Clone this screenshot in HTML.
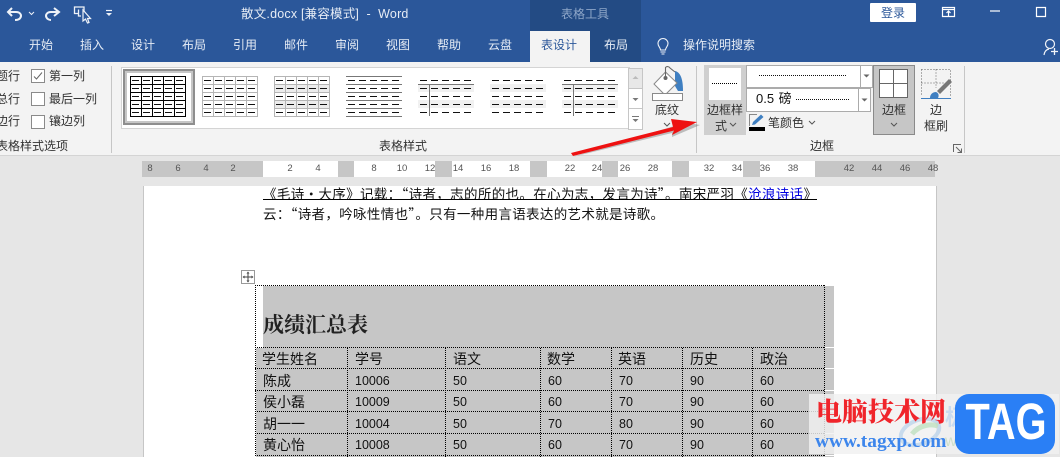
<!DOCTYPE html>
<html><head><meta charset="utf-8"><style>
html,body{margin:0;padding:0}
body{width:1060px;height:457px;overflow:hidden;position:relative;background:#e6e6e6;font-family:"Liberation Sans","Noto Sans CJK SC",sans-serif;font-size:12px;color:#333}
.a,.t,.c{position:absolute}
.t,.c{white-space:nowrap;line-height:16px}
.c{transform:translateX(-50%)}
.w{color:#e6ecf5}
.d{font-family:"Liberation Sans","WenQuanYi Zen Hei","Noto Sans CJK SC",sans-serif;font-size:14px;color:#111;line-height:18px}
.n{font-size:12.5px;color:#111;line-height:18px}
.r{font-size:9.5px;color:#555;transform:translateX(-50%);position:absolute;top:163px;line-height:12px}
.p{font-size:13.5px;line-height:16px;color:#111;font-family:"WenQuanYi Zen Hei","Noto Sans CJK SC",sans-serif}
svg{position:absolute;overflow:visible}
</style></head><body>

<div class="a" style="left:0;top:0;width:1060px;height:62px;background:#2b579a"></div>
<div class="a" style="left:530px;top:0;width:111px;height:31px;background:#234b84"></div>
<div class="a" style="left:590px;top:31px;width:51px;height:31px;background:#234b84"></div>
<div class="a" style="left:530px;top:31px;width:60px;height:31px;background:#f3f3f3"></div>
<div class="a" style="left:0;top:62px;width:1060px;height:93px;background:#f3f3f3;border-bottom:1px solid #d4d4d4"></div>

<svg style="left:0;top:0" width="130" height="30" fill="none" stroke="#eef2f8" stroke-width="2">
<path d="M12 8L8 12L12 16M8 12H16C20 12 22 15 20.500 17.500C19.500 19.500 17 20 15 20"/>
<path d="M29 12l2.500 2.500L34 12" stroke-width="1"/>
<path d="M54 8L59 12L54 16M59 12H51C47 12 45 15 46.500 17.500C47.500 19.500 50 20 51 20"/>
<path d="M78.500 13.500H74.500V7H84V12M78.500 9.500V16H81" stroke-width="1.300"/>
<path d="M83 10V21L85.500 19L87.500 23L89 22.500L87.500 18.500H90.500Z" fill="#2b579a" stroke-width="1.200"/>
<path d="M106 10.500h6" stroke-width="1.200"/><path d="M106 13h6l-3 3z" fill="#eef2f8" stroke="none"/>
</svg>

<div class="t w" style="left:241px;top:6px;font-size:12.500px;letter-spacing:.2px">散文.docx [兼容模式]&nbsp; -&nbsp; Word</div>
<div class="c" style="left:585px;top:6px;color:#8fa7c9">表格工具</div>
<div class="a" style="left:870px;top:3px;width:46px;height:19px;background:#fff;border-radius:1px"></div>
<div class="c" style="left:893px;top:5px;color:#2b579a">登录</div>
<svg style="left:940px;top:5px" width="110" height="20" fill="none" stroke="#fff" stroke-width="1.200">
<path d="M2.500 2.500H14.500V11.500H2.500ZM2.500 4.500H14.500"/><path d="M8.500 11V6.500M6.500 8L8.500 6L10.500 8"/>
<path d="M50 6H60"/><path d="M96.500 2.500H105.500V11.500H96.500Z"/></svg>

<div class="c w" style="left:41px;top:37px">开始</div>
<div class="c w" style="left:92px;top:37px">插入</div>
<div class="c w" style="left:143px;top:37px">设计</div>
<div class="c w" style="left:194px;top:37px">布局</div>
<div class="c w" style="left:245px;top:37px">引用</div>
<div class="c w" style="left:296px;top:37px">邮件</div>
<div class="c w" style="left:347px;top:37px">审阅</div>
<div class="c w" style="left:398px;top:37px">视图</div>
<div class="c w" style="left:449px;top:37px">帮助</div>
<div class="c w" style="left:500px;top:37px">云盘</div>
<div class="c" style="left:559px;top:37px;color:#2b579a">表设计</div>
<div class="c w" style="left:616px;top:37px">布局</div>
<svg style="left:655px;top:37px" width="16" height="20" fill="none" stroke="#eef2f8" stroke-width="1.100">
<path d="M5.500 13C5.500 10.500 3 9.500 3 6.500A5 5 0 0 1 13 6.500C13 9.500 10.500 10.500 10.500 13ZM5.500 15H10.500M6.500 17H9.500"/></svg>
<div class="t w" style="left:683px;top:37px">操作说明搜索</div>
<svg style="left:1040px;top:36px" width="20" height="22" fill="none" stroke="#f0f3f8" stroke-width="1.200">
<circle cx="10" cy="8" r="4.500"/><path d="M4 19C4.500 15.500 6.500 13.500 9 13"/><path d="M11 15.500H18M14.500 12V19" stroke-width="1.300"/></svg>

<!-- left options -->
<div class="t" style="left:-4px;top:68px">题行</div>
<div class="t" style="left:-4px;top:91px">总行</div>
<div class="t" style="left:-4px;top:113px">边行</div>
<div class="a" style="left:31px;top:69px;width:12px;height:12px;border:1px solid #8a8a8a;background:#fff"></div>
<div class="a" style="left:31px;top:92px;width:12px;height:12px;border:1px solid #8a8a8a;background:#fff"></div>
<div class="a" style="left:31px;top:115px;width:12px;height:12px;border:1px solid #8a8a8a;background:#fff"></div>
<svg style="left:31px;top:69px" width="14" height="14" fill="none" stroke="#666"><path d="M3 7.500L5.500 10L11 3.500"/></svg>
<div class="t" style="left:49px;top:68px">第一列</div>
<div class="t" style="left:49px;top:91px">最后一列</div>
<div class="t" style="left:49px;top:113px">镶边列</div>
<div class="t" style="left:-4px;top:138px">表格样式选项</div>
<div class="a" style="left:111px;top:66px;width:1px;height:87px;background:#c6c6c6"></div>
<div class="a" style="left:696px;top:66px;width:1px;height:87px;background:#c6c6c6"></div>
<div class="a" style="left:964px;top:66px;width:1px;height:87px;background:#c6c6c6"></div>

<!-- gallery -->
<div class="a" style="left:121px;top:67px;width:507px;height:60px;background:#fff;border:1px solid #d4d4d4"></div>
<div class="a" style="left:123px;top:69px;width:68px;height:52px;border:2px solid #8e8e8e;background:#c6c6c6"></div>
<div class="a" style="left:127px;top:73px;width:64px;height:48px;background:#fff"></div>
<svg width="0" height="0" style="left:0;top:0"><defs>
<symbol id="ds" width="56" height="42" overflow="visible"><path d="M2 4.500h7M13 4.500h7M24 4.500h7M35 4.500h7M46 4.500h7M2 12.500h7M13 12.500h7M24 12.500h7M35 12.500h7M46 12.500h7M2 20.500h7M13 20.500h7M24 20.500h7M35 20.500h7M46 20.500h7M2 28.500h7M13 28.500h7M24 28.500h7M35 28.500h7M46 28.500h7M2 36.500h7M13 36.500h7M24 36.500h7M35 36.500h7M46 36.500h7" stroke="#111" fill="none"/></symbol>
<symbol id="gr" width="56" height="42" overflow="visible"><path d="M.5 .5H55.500V40.500H.5ZM11.500 .5V40.500M22.500 .5V40.500M33.500 .5V40.500M44.500 .5V40.500M.5 8.500H55.500M.5 16.500H55.500M.5 24.500H55.500M.5 32.500H55.500" fill="none"/></symbol>
</defs></svg>
<svg style="left:130px;top:76px" width="56" height="42" stroke="#000"><use href="#gr" stroke-width="1"/><use href="#ds"/></svg>
<svg style="left:202px;top:76px" width="56" height="42" stroke="#b5b5b5"><use href="#gr"/><use href="#ds"/></svg>
<svg style="left:274px;top:76px" width="56" height="42"><rect x="0" y="8" width="56" height="8" fill="#ececec"/><rect x="0" y="24" width="56" height="8" fill="#ececec"/><use href="#gr" stroke="#b5b5b5"/><use href="#ds"/></svg>
<svg style="left:346px;top:76px" width="56" height="42" stroke="#777"><path d="M0 .5H56M0 8.500H56M0 16.500H56M0 24.500H56M0 32.500H56M0 40.500H56" fill="none"/><use href="#ds"/></svg>
<svg style="left:418px;top:76px" width="56" height="42"><rect y="8" width="56" height="8" fill="#f1f1f1"/><rect y="24" width="56" height="8" fill="#f1f1f1"/><path d="M0 8.500H56M11.500 8V40" stroke="#777" fill="none"/><use href="#ds"/></svg>
<svg style="left:490px;top:76px" width="56" height="42"><rect y="8" width="56" height="8" fill="#f1f1f1"/><rect y="24" width="56" height="8" fill="#f1f1f1"/><use href="#ds"/></svg>
<svg style="left:562px;top:76px" width="56" height="42"><rect y="8" width="56" height="8" fill="#f1f1f1"/><rect y="24" width="56" height="8" fill="#f1f1f1"/><path d="M0 8.500H56M11.500 8V40" stroke="#777" fill="none"/><use href="#ds"/></svg>
<div class="a" style="left:628px;top:68px;width:13px;height:60px;background:#fff;border:1px solid #c6c6c6"></div>
<div class="a" style="left:629px;top:69px;width:13px;height:20px;background:#e8e8e8"></div>
<svg style="left:628px;top:68px" width="15" height="62" fill="#777"><path d="M0 20.500H14M0 40.500H14" stroke="#c6c6c6"/><path d="M4.500 11l3-3l3 3z" fill="#bbb"/><path d="M4.500 30h6l-3 3z"/><path d="M4 48h7v1H4zM4.500 51h6l-3 3z"/></svg>
<div class="c" style="left:403px;top:138px">表格样式</div>

<!-- shading -->
<svg style="left:650px;top:64px" width="36" height="40">
<path d="M25 7C30 8 33 14 33 27H28L25 22Z" fill="#3f7fc1"/>
<path d="M15.500 8L4 20L15 31L27 19Z" fill="#fff" stroke="#8a8a8a"/>
<path d="M15.500 13V3.500C17 2 19 2.500 20 4L25 8" fill="none" stroke="#666" stroke-width="1.100"/>
<circle cx="15.500" cy="14" r="2" fill="#666"/>
<rect x="2.500" y="29.500" width="30" height="7" fill="#fff" stroke="#8a8a8a"/>
</svg>
<div class="c" style="left:667px;top:102px">底纹</div>
<svg style="left:663px;top:122px" width="10" height="6" fill="none" stroke="#555"><path d="M1 1l3 3l3-3"/></svg>

<!-- border styles -->
<div class="a" style="left:704px;top:65px;width:42px;height:70px;background:#cfcfcf"></div>
<div class="a" style="left:709px;top:68px;width:32px;height:32px;background:#fff"></div>
<svg style="left:704px;top:65px" width="42" height="70" fill="none" stroke="#000"><path d="M8 18.500H34" stroke-dasharray="1 1"/></svg>
<div class="c" style="left:725px;top:102px">边框样</div>
<div class="c" style="left:721px;top:118px">式</div>
<svg style="left:729px;top:122px" width="10" height="6" fill="none" stroke="#555"><path d="M1 1l3 3l3-3"/></svg>
<div class="a" style="left:746px;top:65px;width:125px;height:21px;background:#fff;border:1px solid #ababab"></div>
<div class="a" style="left:746px;top:88px;width:123px;height:22px;background:#fff;border:1px solid #ababab"></div>
<svg style="left:746px;top:65px" width="128" height="48" fill="none" stroke="#111">
<path d="M13 10.500H100M50 34.500H103" stroke-dasharray="1 1"/>
<path d="M114.500 0V22M112.500 23V46" stroke="#ababab"/>
<path d="M117.500 9.500h6l-3 3z" fill="#666" stroke="none"/><path d="M115.500 33.500h6l-3 3z" fill="#666" stroke="none"/></svg>
<div class="t" style="left:756px;top:91px;color:#111;font-size:13px;word-spacing:1px">0.5 磅</div>
<svg style="left:748px;top:113px" width="20" height="20" fill="none">
<path d="M1.500 13V1.500H9" stroke="#888"/><path d="M4 12L5 9L13 1.500L15.500 4L7 11.500Z" fill="#3f7fc1"/>
<rect x="1" y="14" width="16" height="4" fill="#000"/></svg>
<div class="t" style="left:768px;top:115px">笔颜色</div>
<svg style="left:808px;top:120px" width="10" height="6" fill="none" stroke="#555"><path d="M1 1l3 3l3-3"/></svg>
<div class="a" style="left:873px;top:65px;width:40px;height:68px;background:#c6c6c6;border:1px solid #8a8a8a"></div>
<svg style="left:879px;top:69px" width="30" height="30" fill="#fff" stroke="#666"><rect x=".5" y=".5" width="28" height="28"/><path d="M14.500 .5V28.500M.5 14.500H28.500"/></svg>
<div class="c" style="left:894px;top:102px">边框</div>
<svg style="left:890px;top:122px" width="10" height="6" fill="none" stroke="#555"><path d="M1 1l3 3l3-3"/></svg>
<svg style="left:921px;top:68px" width="32" height="34" fill="none">
<path d="M.5 1.500H29.500V28M.5 1.500V28M15 1.500V20M.5 15H26" stroke="#666" stroke-dasharray="1 2"/>
<path d="M0 30.500H30" stroke="#3f7fc1"/>
<path d="M9 30C9 26 12 24 15 24C18 25 18 28 17 30Z" fill="#3f7fc1"/>
<path d="M16 23L28 11L31 14L19 26Z" fill="#777"/></svg>
<div class="c" style="left:936px;top:102px">边</div>
<div class="c" style="left:936px;top:118px">框刷</div>
<div class="c" style="left:822px;top:138px">边框</div>
<svg style="left:953px;top:144px" width="10" height="10" fill="none" stroke="#666"><path d="M.5 8V.5H8"/><path d="M3 3L8 8M8.500 4.500V8.500H4.500"/></svg>

<!-- ruler -->
<div class="a" style="left:142px;top:161px;width:793px;height:16px;background:#c6c6c6"></div>
<div class="a" style="left:263px;top:161px;width:75px;height:16px;background:#fff"></div>
<div class="a" style="left:354px;top:161px;width:81px;height:16px;background:#fff"></div>
<div class="a" style="left:452px;top:161px;width:78px;height:16px;background:#fff"></div>
<div class="a" style="left:547px;top:161px;width:55px;height:16px;background:#fff"></div>
<div class="a" style="left:618px;top:161px;width:54px;height:16px;background:#fff"></div>
<div class="a" style="left:689px;top:161px;width:54px;height:16px;background:#fff"></div>
<div class="a" style="left:760px;top:161px;width:55px;height:16px;background:#fff"></div>
<span class="r" style="left:150px">8</span><span class="r" style="left:178px">6</span><span class="r" style="left:206px">4</span><span class="r" style="left:233px">2</span>
<span class="r" style="left:290px">2</span><span class="r" style="left:318px">4</span><span class="r" style="left:374px">8</span><span class="r" style="left:402px">10</span><span class="r" style="left:430px">12</span><span class="r" style="left:458px">14</span><span class="r" style="left:486px">16</span><span class="r" style="left:514px">18</span><span class="r" style="left:570px">22</span><span class="r" style="left:597px">24</span><span class="r" style="left:625px">26</span><span class="r" style="left:653px">28</span><span class="r" style="left:709px">32</span><span class="r" style="left:737px">34</span><span class="r" style="left:765px">36</span><span class="r" style="left:793px">38</span><span class="r" style="left:849px">42</span><span class="r" style="left:877px">44</span><span class="r" style="left:905px">46</span><span class="r" style="left:933px">48</span>

<!-- page -->
<div class="a" style="left:143px;top:186px;width:792px;height:271px;background:#fff;border-left:1px solid #c6c6c6;border-right:1px solid #c6c6c6;overflow:hidden">
<div class="t p" style="left:119px;top:-1px;width:554px;border-bottom:1px solid #000;height:14px;overflow:hidden;text-align-last:justify">《毛诗·大序》记载：“诗者，志的所的也。在心为志，发言为诗”。南宋严羽《<span style="color:#0000e0">沧浪诗话</span>》</div>
<div class="t p" style="left:119px;top:19px;width:401px;text-align-last:justify">云：“诗者，吟咏性情也”。只有一种用言语表达的艺术就是诗歌。</div>
</div>

<!-- table -->
<div class="a" style="left:241px;top:270px;width:12px;height:12px;border:1px solid #999;background:#fff"></div>
<svg style="left:241px;top:270px" width="14" height="14" fill="#444" stroke="#444"><path d="M7 3V11M3 7H11" fill="none"/><path d="M5.500 3.500L7 1.500L8.500 3.500ZM5.500 10.500L7 12.500L8.500 10.500ZM3.500 5.500L1.500 7L3.500 8.500ZM10.500 5.500L12.500 7L10.500 8.500Z" stroke="none"/></svg>
<div class="a" style="left:263px;top:286px;width:571px;height:62px;background:#c6c6c6"></div>
<div class="a" style="left:256px;top:348px;width:578px;height:109px;background:#c6c6c6"></div>
<svg style="left:0;top:0" width="1060" height="457" fill="none" stroke="#fff"><path d="M825 347.500H834M825 368.500H834M825 390.500H834M825 411.500H834M825 433.500H834M825 455.500H834"/></svg>
<svg style="left:0;top:0" width="1060" height="457" fill="none" stroke="#000" stroke-dasharray="1 1" shape-rendering="crispEdges">
<path d="M255 285.500H825M255 347.500H825M255 368.500H825M255 390.500H825M255 411.500H825M255 433.500H825M255 455.500H825"/>
<path d="M255.500 285V457M824.500 285V457M347.500 348V457M445.500 348V457M540.500 348V457M611.500 348V457M682.500 348V457M752.500 348V457"/></svg>
<div class="t" style="left:263px;top:312px;font-size:21px;line-height:24px;font-family:'Noto Serif CJK SC',serif;font-weight:700;color:#222">成绩汇总表</div>

<div class="t d" style="left:262px;top:350px">学生姓名</div><div class="t d" style="left:355px;top:350px">学号</div><div class="t d" style="left:453px;top:350px">语文</div><div class="t d" style="left:547px;top:350px">数学</div><div class="t d" style="left:618px;top:350px">英语</div><div class="t d" style="left:690px;top:350px">历史</div><div class="t d" style="left:760px;top:350px">政治</div>
<div class="t d" style="left:263px;top:372px">陈成</div><div class="t n" style="left:355px;top:372px">10006</div><div class="t n" style="left:453px;top:372px">50</div><div class="t n" style="left:548px;top:372px">60</div><div class="t n" style="left:619px;top:372px">70</div><div class="t n" style="left:690px;top:372px">90</div><div class="t n" style="left:760px;top:372px">60</div>
<div class="t d" style="left:263px;top:393px">侯小磊</div><div class="t n" style="left:355px;top:393px">10009</div><div class="t n" style="left:453px;top:393px">50</div><div class="t n" style="left:548px;top:393px">60</div><div class="t n" style="left:619px;top:393px">70</div><div class="t n" style="left:690px;top:393px">90</div><div class="t n" style="left:760px;top:393px">60</div>
<div class="t d" style="left:263px;top:415px">胡一一</div><div class="t n" style="left:355px;top:415px">10004</div><div class="t n" style="left:453px;top:415px">50</div><div class="t n" style="left:548px;top:415px">70</div><div class="t n" style="left:619px;top:415px">80</div><div class="t n" style="left:690px;top:415px">90</div><div class="t n" style="left:760px;top:415px">60</div>
<div class="t d" style="left:263px;top:436px">黄心怡</div><div class="t n" style="left:355px;top:436px">10008</div><div class="t n" style="left:453px;top:436px">50</div><div class="t n" style="left:548px;top:436px">60</div><div class="t n" style="left:619px;top:436px">70</div><div class="t n" style="left:690px;top:436px">90</div><div class="t n" style="left:760px;top:436px">60</div>

<!-- red arrow -->
<svg style="left:0;top:0" width="1060" height="457">
<path d="M572 157L672 133L672 137L700 125L672 120L674 126Z" fill="#555" opacity=".35"/>
<path d="M571 153L673 127L671 119L697 122L672 135L674 130.500L573 156Z" fill="#ee1111"/>
</svg>

<!-- watermark -->
<div class="a" style="left:809px;top:394px;width:250px;height:60px;background:rgba(240,240,240,.82)"></div>
<svg style="left:900px;top:408px" width="50" height="42" fill="none"><ellipse cx="20" cy="24" rx="20" ry="12" stroke="#b5d0ea" stroke-width="4" opacity=".7" transform="rotate(-20 20 24)"/><path d="M12 26C20 16 32 16 38 18" stroke="#bfe0bf" stroke-width="5" opacity=".8"/></svg>
<div class="t" style="left:945px;top:404px;font-size:22px;line-height:28px;color:#c9dbef;font-weight:700">极光下载站</div>
<div class="t" style="left:945px;top:433px;font-size:16px;line-height:18px;color:#cfe0c9">www.xz7.com</div>
<div class="t" style="left:816px;top:396px;font-size:26px;line-height:30px;font-family:'Noto Serif CJK SC',serif;font-weight:900;color:#f0252b">电脑技术网</div>
<div class="t" style="left:815px;top:431px;font-size:19.400px;line-height:22px;font-family:'Liberation Serif',serif;font-weight:700;color:#3d86ec">www.tagxp.com</div>
<div class="a" style="left:955px;top:394px;width:100px;height:60px;background:#2a7ff5;border-radius:14px"></div>
<div class="t" style="left:1006px;top:392px;font-size:51px;line-height:60px;font-weight:700;color:#fff;transform:translateX(-50%) scaleX(.78)">TAG</div>

</body></html>
